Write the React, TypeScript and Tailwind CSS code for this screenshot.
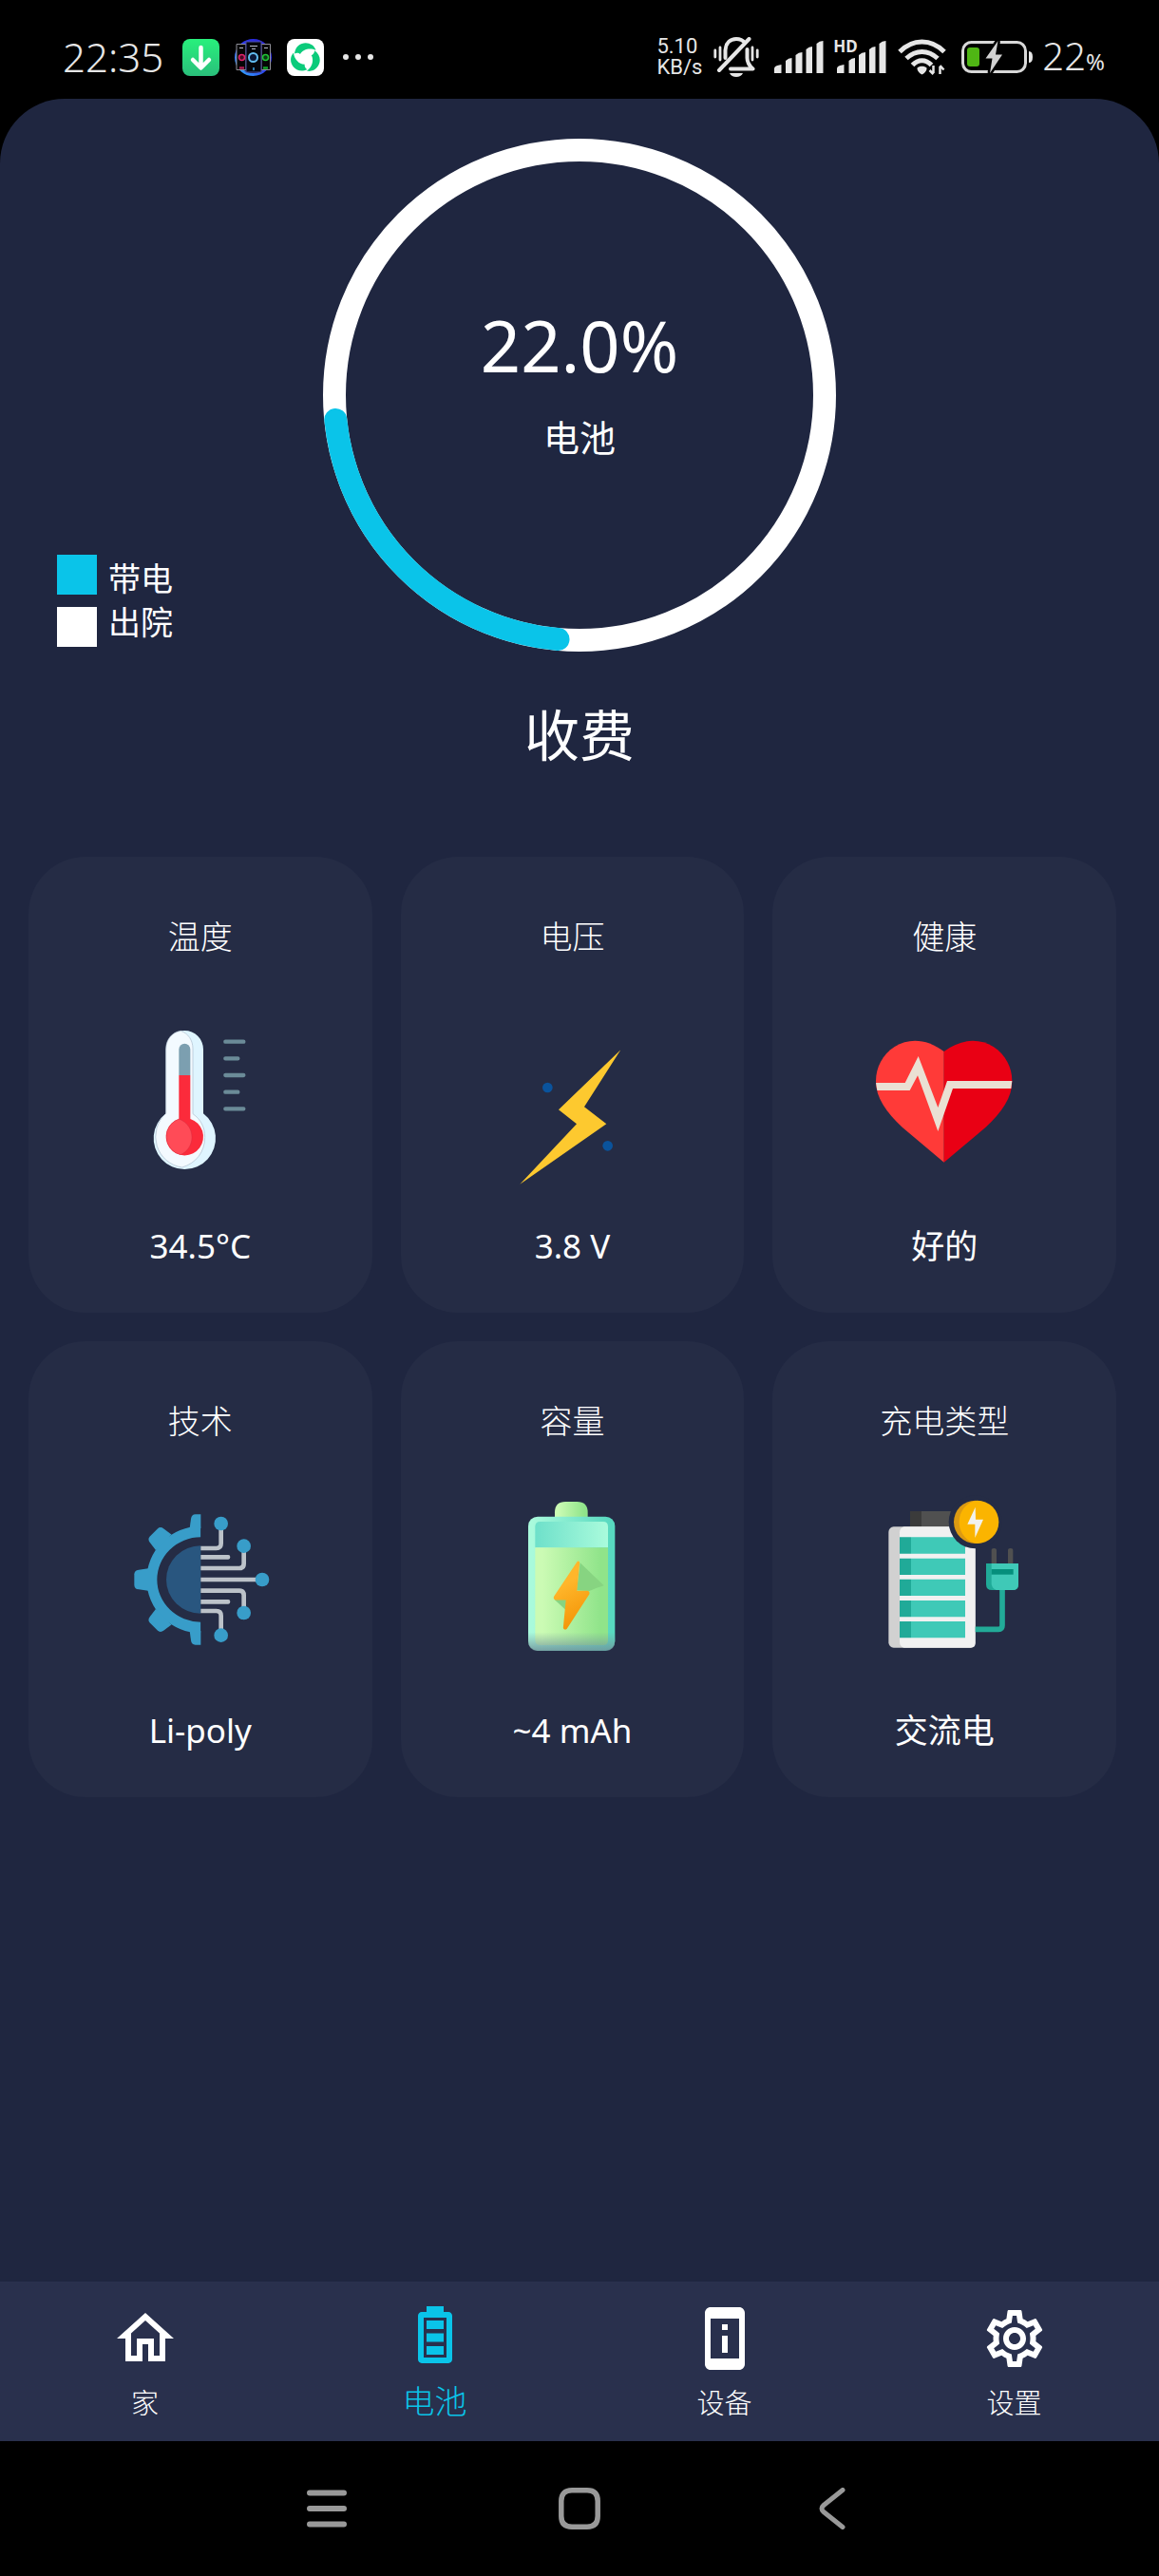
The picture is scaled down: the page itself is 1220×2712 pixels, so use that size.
import React, { useState } from "react";
import {
  MdOutlineHome,
  MdOutlineSettings,
  MdPermDeviceInformation,
} from "react-icons/md";

const BATTERY_LEVEL = 22;

const StatusBar: React.FC = () => (
  <header className="flex h-[104px] items-center justify-between bg-black pl-[66px] pr-[57px] pt-4 text-[#e6e6e6]">
    <div className="flex items-center">
      <span className="mr-5 text-[42px] font-light leading-none">22:35</span>
      <div className="flex items-center gap-4">
        <svg viewBox="0 0 39 39" className="h-[39px] w-[39px]">
          <defs>
            <linearGradient id="download-bg" x1="0" y1="0" x2="0" y2="1">
              <stop offset="0" stopColor="#28f07c" />
              <stop offset="1" stopColor="#2abf7b" />
            </linearGradient>
          </defs>
          <rect width="39" height="39" rx="8" fill="url(#download-bg)" />
          <path
            d="M19.5 9v20M11 22l8.500 8.500 8.500-8.500"
            fill="none"
            stroke="#fff"
            strokeWidth="4.500"
            strokeLinecap="round"
            strokeLinejoin="round"
          />
        </svg>
        <svg viewBox="0 0 39 39" className="h-[39px] w-[39px]">
          <defs>
            <linearGradient id="themes-ring" x1="1" y1="0" x2="0" y2="1">
              <stop offset="0" stopColor="#2a1ed2" />
              <stop offset="0.500" stopColor="#2b3cf0" />
              <stop offset="1" stopColor="#35b6ff" />
            </linearGradient>
          </defs>
          <circle cx="19.500" cy="19.500" r="18" fill="#05061c" stroke="url(#themes-ring)" strokeWidth="3" />
          <path d="M2 5.500h10v27H2zM28 5.500h9.500v27H28z" fill="#050505" stroke="#8f8f98" strokeWidth="1" />
          <rect x="12" y="3" width="16" height="32" fill="#04060c" stroke="#4a4fa0" strokeWidth="1" />
          <path d="M16 7.500h8M18 10.500h4M5 9.500h4M31 9.500h4" stroke="#b8bccb" strokeWidth="1" />
          <circle cx="7.500" cy="19.500" r="3" fill="#4a0a25" stroke="#e0246c" strokeWidth="1.500" />
          <circle cx="19.500" cy="19.500" r="4.500" fill="#0a1838" stroke="#62bdf0" strokeWidth="2" />
          <circle cx="32.500" cy="19.500" r="3" fill="#083a12" stroke="#22c436" strokeWidth="1.500" />
          <path d="M5 30.500h5" stroke="#b01c55" strokeWidth="2.500" />
          <path d="M30 30.500h5" stroke="#13a52b" strokeWidth="2.500" />
          <path d="M20 30v3" stroke="#39a4e8" strokeWidth="1.500" />
        </svg>
        <svg viewBox="0 0 39 39" className="h-[39px] w-[39px]">
          <rect width="39" height="39" rx="8" fill="#fff" />
          <g fill="#0bcb7b" transform="translate(19.500 20)">
            <path d="M-11.500-4.500C-10-19 8-19 11-8 5-11-3-9-5.500-4-7-5.500-9.500-5.500-11.500-4.500z" />
            <path d="M-11.500-4.500C-10-19 8-19 11-8 5-11-3-9-5.500-4-7-5.500-9.500-5.500-11.500-4.500z" transform="rotate(120)" />
            <path d="M-11.500-4.500C-10-19 8-19 11-8 5-11-3-9-5.500-4-7-5.500-9.500-5.500-11.500-4.500z" transform="rotate(240)" />
          </g>
        </svg>
      </div>
      <svg viewBox="0 0 32 6" className="ml-5 h-[6px] w-[32px]" fill="currentColor">
        <circle cx="3" cy="3" r="3" />
        <circle cx="16" cy="3" r="3" />
        <circle cx="29" cy="3" r="3" />
      </svg>
    </div>

    <div className="flex items-center">
      <div className="mr-3 font-[Roboto,sans-serif] text-[22px] leading-[22px]">
        <div>5.10</div>
        <div>KB/s</div>
      </div>
      <svg
        viewBox="0 0 48 42"
        className="mr-4 h-[42px] w-[48px]"
        fill="none"
        stroke="currentColor"
        strokeWidth="4"
        strokeLinecap="round"
        strokeLinejoin="round"
      >
        <path d="M12.500 22v-8C13 6 18 2 24 2c4 0 7 1.500 9 4M35.500 13v9c0 4 2 8 6 11.500H18M37.500 2L6 35" />
        <path d="M1.800 14v7M7 11v13M41 11v13M46.200 14v7" strokeWidth="2.800" />
        <path d="M17 38h14c-1 2.500-4 4-7 4s-6-1.500-7-4z" fill="currentColor" stroke="none" />
      </svg>
      <svg viewBox="0 0 52 34" className="mr-3 h-[34px] w-[52px]" fill="currentColor">
        <path d="M0 29q0-3 7.500-4v9H0zM12 21q3-3 6.500-3v16H12zM22.500 15q3-3 7-3v22h-7zM33.500 9q3-3 6.500-3v28h-6.500zM44.500 3q3-3 7-3v34h-7z" />
      </svg>
      <div className="relative mr-3">
        <span className="absolute -left-0.5 -top-px text-[17px] font-bold leading-[14px]">HD</span>
        <svg viewBox="0 0 54 34" className="h-[34px] w-[54px]" fill="currentColor">
          <path d="M2 29q0-3 7.500-4v9H2zM14.500 21q3-3 6.500-3v16h-6.500zM25 15q3-3 7-3v22h-7zM36 9q3-3 6.500-3v28H36zM46.500 3q3-3 7-3v34h-7z" />
        </svg>
      </div>
      <svg viewBox="0 0 51 38" className="mr-4 h-[38px] w-[51px]" fill="none" stroke="currentColor" strokeWidth="5">
        <path d="M2 13.500C16-.5 35-.5 49 13.500M9 20.500c10-9.500 23-9.500 33 0M15.500 27.500c6-6.500 14-6.500 20 0" />
        <path d="M20.500 30.500c2-2.500 8-2.500 10 0 .5 3-3 6-5 7-2-1-5.500-4-5-7z" fill="currentColor" stroke="none" />
        <path d="M37.500 28v8M37.500 37l-4-4M44.500 37v-8M44.500 28l4 4.500" strokeWidth="2.500" />
      </svg>
      <svg viewBox="0 0 75 34" className="mr-[10px] h-[34px] w-[75px]">
        <rect x="1.500" y="1.500" width="66" height="31" rx="9" fill="none" stroke="#d8d8d8" strokeWidth="3" />
        <rect x="6" y="7" width="13" height="20" rx="3" fill="#4fb614" />
        <path d="M71 11q4 0 4 6t-4 6z" fill="#e6e6e6" />
        <path
          d="M38.500 0L25.500 18.500h7L30 34l13-19.500h-7z"
          fill="#d2d2d2"
          stroke="#000"
          strokeWidth="5"
          paintOrder="stroke"
        />
      </svg>
      <span className="text-[40px] font-light leading-none">
        22<span className="text-2xl font-normal">%</span>
      </span>
    </div>
  </header>
);

const BatteryRing: React.FC<{ level: number }> = ({ level }) => {
  const radius = 258;
  const length = 2 * Math.PI * radius;

  return (
    <div className="grid place-items-center">
      <svg viewBox="0 0 540 540" className="col-start-1 row-start-1 h-[540px] w-[540px]" fill="none">
        <circle cx="270" cy="270" r={radius} stroke="#fff" strokeWidth="24" />
        <circle
          cx="270"
          cy="270"
          r={radius}
          stroke="#0ac4e9"
          strokeWidth="24"
          strokeLinecap="round"
          strokeDasharray={`${(length * level) / 100} ${length}`}
          transform="rotate(95 270 270)"
        />
      </svg>
      <div className="col-start-1 row-start-1 flex flex-col items-center gap-[18px] pb-[26px]">
        <span className="text-[74px] leading-[96px]">{level.toFixed(1)}%</span>
        <span className="text-[38px] leading-[60px]">电池</span>
      </div>
    </div>
  );
};

const ThermometerIcon = () => (
  <svg viewBox="272 477 600 600" className="h-[200px] w-[200px]">
    <path d="M463 644a59 59 0 0 1 118 0v203a98 98 0 1 1-118 0z" fill="#dff5ff" />
    <path
      d="M463 644c0-32 20-54 47-58 24 8 38 30 38 56v206c24 16 38 42 38 74 0 46-28 82-72 95a98 98 0 0 1-51-170z"
      fill="#f3faff"
      stroke="#aebccb"
      strokeWidth="2"
    />
    <path d="M504 644a18 18 0 0 1 36 0v82h-36z" fill="#7c9fb0" />
    <path d="M504 726h36v138a59 59 0 1 1-36 0z" fill="#fb2b3b" />
    <path d="M504 864c26 10 41 32 41 58 0 24-14 46-36 55a59 59 0 0 1-5-113z" fill="#ff4b57" stroke="#c8283c" strokeWidth="1" />
    <path
      d="M651 620h57M651 673h39M651 726h57M651 779h39M651 832h57"
      stroke="#6b8b98"
      strokeWidth="13"
      strokeLinecap="round"
    />
  </svg>
);

const VoltageIcon = () => (
  <svg viewBox="277 477 600 600" className="h-[200px] w-[200px]">
    <path d="M731 646L616 826l70 54-273 190 179-190-57-45z" fill="#fdc92f" />
    <circle cx="500" cy="765" r="16" fill="#0a539c" />
    <circle cx="690" cy="949" r="16" fill="#0a539c" />
  </svg>
);

const HeartIcon = () => (
  <svg viewBox="282 477 600 600" className="h-[200px] w-[200px]">
    <path d="M581 651C530 612 472 606 425 636c-38 25-59 64-59 109 0 52 32 98 84 146l131 110z" fill="#ff3a38" />
    <path d="M581 651c51-39 109-45 156-15 38 25 59 64 59 109 0 52-32 98-84 146l-131 110z" fill="#e90014" />
    <path d="M366 750h92l42-84 62 162 29-84h205l-3 24H609l-47 135-64-176-25 47H370z" fill="#eae0d3" />
  </svg>
);

const TechnologyIcon = () => {
  const tooth = "M407 754l-30 4q-14 2-14 14v34q0 12 14 14l30 4z";
  return (
    <svg viewBox="272 477 600 600" className="h-[200px] w-[200px]">
      <defs>
        <clipPath id="gear-half">
          <rect x="340" y="560" width="233" height="460" />
        </clipPath>
      </defs>
      <g fill="#389dc9" clipPath="url(#gear-half)">
        <path d="M573 620a171 169 0 0 0 0 338v-35a138 134 0 0 1 0-268z" />
        <path d={tooth} />
        <path d={tooth} transform="rotate(45 573 789)" />
        <path d={tooth} transform="rotate(-45 573 789)" />
        <path d={tooth} transform="rotate(90 573 789) translate(4)" />
        <path d={tooth} transform="rotate(-90 573 789) translate(4)" />
      </g>
      <path d="M573 682a109 107 0 0 0 0 214z" fill="#29567f" />
      <path
        d="M573 690h49q15 0 15-15v-50M573 753h122q14 0 14-14v-50M573 789h190M573 824h122q14 0 14 14v50M573 888h49q15 0 15 15v50"
        fill="none"
        stroke="#bcc2c9"
        strokeWidth="14"
      />
      <path d="M573 711h87q6 0 6 7t-6 7h-87zM573 852h87q6 0 6 7t-6 7h-87z" fill="#bcc2c9" />
      <g fill="#389dc9">
        <circle cx="637" cy="612" r="22" />
        <circle cx="709" cy="683" r="22" />
        <circle cx="767" cy="789" r="22" />
        <circle cx="709" cy="894" r="22" />
        <circle cx="637" cy="965" r="22" />
      </g>
    </svg>
  );
};

const CapacityIcon = () => (
  <svg viewBox="277 477 600 600" className="h-[200px] w-[200px]">
    <defs>
      <linearGradient id="cell-green">
        <stop offset="0.100" stopColor="#cbfbb4" />
        <stop offset="0.900" stopColor="#90e48a" />
      </linearGradient>
      <linearGradient id="cell-case">
        <stop offset="0.050" stopColor="#a9fadc" />
        <stop offset="0.950" stopColor="#58d9c0" />
      </linearGradient>
      <linearGradient id="cell-glass">
        <stop offset="0" stopColor="#6ee0ca" />
        <stop offset="1" stopColor="#aafbdc" />
      </linearGradient>
      <linearGradient id="cell-base" x1="0" y1="0" x2="0" y2="1">
        <stop offset="0" stopColor="#7a9aa0" stopOpacity="0" />
        <stop offset="1" stopColor="#6f949c" stopOpacity="0.850" />
      </linearGradient>
      <linearGradient id="cell-bolt" x1="0.300" y1="0" x2="0.600" y2="1">
        <stop offset="0.300" stopColor="#ffb62b" />
        <stop offset="1" stopColor="#f39406" />
      </linearGradient>
    </defs>
    <path d="M523 592v-15q0-34 34-34h36q34 0 34 34v15z" fill="url(#cell-green)" />
    <rect x="439" y="590" width="274" height="423" rx="30" fill="url(#cell-case)" />
    <path d="M461 688v-66q0-16 16-16h198q16 0 16 16v66z" fill="url(#cell-glass)" />
    <path d="M461 688h230v292q0 16-16 16H477q-16 0-16-16z" fill="url(#cell-green)" />
    <path d="M603 736l75 72q-20 6-46 17l-40-2zM522 852l35 32 5-32z" fill="#87d481" />
    <path d="M439 955h274v28q0 30-30 30H469q-30 0-30-30z" fill="url(#cell-base)" />
    <path
      d="M597 735l-73 110q-1 4 3 4h36l-9 92q2 2 4 0l70-108q1-4-3-4h-37l9-92z"
      fill="url(#cell-bolt)"
      stroke="url(#cell-bolt)"
      strokeWidth="9"
      strokeLinejoin="round"
    />
  </svg>
);

const ChargeTypeIcon = () => (
  <svg viewBox="282 477 600 600" className="h-[200px] w-[200px]">
    <rect x="474" y="573" width="140" height="52" fill="#505050" />
    <rect x="474" y="573" width="36" height="52" fill="#3b3b3b" />
    <rect x="406" y="622" width="274" height="382" rx="16" fill="#d1d1d1" />
    <path d="M455 622h211q14 0 14 14v354q0 14-14 14H455q-14-4-14-18V640q0-14 14-18z" fill="#f1f1f1" />
    <path d="M477 655h171v52H477zM477 722h171v52H477zM477 788h171v52H477zM477 855h171v52H477zM477 921h171v52H477z" fill="#3fc9b7" />
    <path d="M441 655h36v52h-36zM441 722h36v52h-36zM441 788h36v52h-36zM441 855h36v52h-36zM441 921h36v52h-36z" fill="#20aa98" />
    <circle cx="680" cy="607" r="84" fill="#252c45" />
    <circle cx="680" cy="607" r="68" fill="#dc9a12" />
    <path d="M686 539a68 68 0 0 1 0 136c-34-4-57-34-57-68s23-64 57-68z" fill="#fbb400" />
    <path d="M680 560l-25 54h24v43l26-58h-24z" fill="#f2f2ee" />
    <path d="M731 740v-43q0-7 8-7t8 7v43zM783 740v-43q0-7 8-7t8 7v43z" fill="#505050" />
    <path d="M765 820v114q0 12-12 12h-73" fill="none" stroke="#22ab98" strokeWidth="17" />
    <path d="M714 738h102v66q0 18-18 18h-66q-18 0-18-18z" fill="#20aa98" />
    <path d="M731 738h85v66q0 18-18 18h-52q-15-6-15-20z" fill="#3fc9b7" />
    <path d="M731 756h69v17h-69z" fill="#058f7c" />
  </svg>
);

interface StatCardProps {
  label: string;
  value: string;
  icon: React.ReactNode;
}

const StatCard: React.FC<StatCardProps> = ({ label, value, icon }) => (
  <section className="flex flex-col items-center rounded-[60px] bg-[#252c45] pb-[46px] pt-[60px]">
    <h2 className="text-[34px] font-light leading-[48px]">{label}</h2>
    <div className="my-[39px]">{icon}</div>
    <p className="text-[35px] leading-[48px]">{value}</p>
  </section>
);

const stats: StatCardProps[] = [
  { label: "温度", value: "34.5°C", icon: <ThermometerIcon /> },
  { label: "电压", value: "3.8 V", icon: <VoltageIcon /> },
  { label: "健康", value: "好的", icon: <HeartIcon /> },
  { label: "技术", value: "Li-poly", icon: <TechnologyIcon /> },
  { label: "容量", value: "~4 mAh", icon: <CapacityIcon /> },
  { label: "充电类型", value: "交流电", icon: <ChargeTypeIcon /> },
];

const BatteryTabIcon = () => (
  <svg viewBox="0 0 24 24" className="h-[72px] w-[72px]" fill="currentColor">
    <path
      fillRule="evenodd"
      d="M9 2h6v2h1.700C17.400 4 18 4.600 18 5.300v15.400c0 .7-.6 1.300-1.300 1.300H7.300C6.600 22 6 21.400 6 20.700V5.300C6 4.600 6.600 4 7.300 4H9zM8 6v14h8V6z"
    />
    <path d="M9 7h6v3H9zM9 11.500h6v3H9zM9 16h6v3H9z" />
  </svg>
);

const tabs = [
  { id: "home", label: "家", icon: <MdOutlineHome className="h-[72px] w-[72px]" /> },
  { id: "battery", label: "电池", icon: <BatteryTabIcon /> },
  {
    id: "device",
    label: "设备",
    icon: <MdPermDeviceInformation className="h-[72px] w-[72px]" />,
  },
  { id: "settings", label: "设置", icon: <MdOutlineSettings className="h-[72px] w-[72px]" /> },
];

const App: React.FC = () => {
  const [activeTab, setActiveTab] = useState("battery");

  return (
    <div
      lang="zh-CN"
      className="flex min-h-screen flex-col bg-black font-['Noto_Sans','Noto_Sans_CJK_SC',sans-serif] text-white"
    >
      <StatusBar />

      <main className="flex-1 rounded-t-[68px] bg-[#1f2640] pt-[42px]">
        <div className="grid grid-cols-[1fr_auto_1fr]">
          <div className="flex items-start gap-3 self-end pb-[5px] pl-[60px]">
            <div className="flex flex-col gap-[13px]">
              <div className="h-[42px] w-[42px] bg-[#0ac4e9]" />
              <div className="h-[42px] w-[42px] bg-white" />
            </div>
            <ul className="pt-0.5 text-[34px] leading-[46px]">
              <li>带电</li>
              <li>出院</li>
            </ul>
          </div>
          <BatteryRing level={BATTERY_LEVEL} />
        </div>
        <h1 className="mt-12 text-center text-[58px] leading-[80px]">收费</h1>

        <div className="mt-[88px] grid grid-cols-3 gap-[30px] pl-[30px] pr-[45px]">
          {stats.map((stat) => (
            <StatCard key={stat.label} {...stat} />
          ))}
        </div>
      </main>

      <nav className="grid h-[168px] grid-cols-4 bg-[#29304d]">
        {tabs.map((tab) => (
          <button
            key={tab.id}
            type="button"
            onClick={() => setActiveTab(tab.id)}
            className={
              tab.id === activeTab
                ? "flex flex-col items-center gap-3 pt-5 text-[34px] font-light leading-[44px] text-[#0ac4e9]"
                : "flex flex-col items-center gap-3 pt-6 text-[29px] font-light leading-[40px]"
            }
          >
            {tab.icon}
            {tab.label}
          </button>
        ))}
      </nav>

      <div className="flex h-[142px] items-center justify-center bg-black text-[#999]">
        <button type="button" aria-label="最近任务" className="flex w-[266px] justify-center">
          <svg viewBox="0 0 42 44" className="h-[44px] w-[42px]" stroke="currentColor" strokeWidth="6" strokeLinecap="round">
            <path d="M3 5.500h36M3 22h36M3 38.500h36" />
          </svg>
        </button>
        <button type="button" aria-label="主屏幕" className="flex w-[266px] justify-center">
          <svg viewBox="0 0 44 44" className="h-[44px] w-[44px]" fill="none" stroke="currentColor" strokeWidth="5.500">
            <path d="M14 2.800h16q11.200 0 11.200 11.200v16q0 11.200-11.200 11.200H14q-11.200 0-11.200-11.200V14Q2.800 2.800 14 2.800z" />
          </svg>
        </button>
        <button type="button" aria-label="返回" className="flex w-[266px] justify-center">
          <svg
            viewBox="0 0 28 44"
            className="h-[44px] w-[28px]"
            fill="none"
            stroke="currentColor"
            strokeWidth="5"
            strokeLinecap="round"
          >
            <path d="M25 2.500L5 18.500q-4 3.500 0 7l20 16" />
          </svg>
        </button>
      </div>
    </div>
  );
};

export default App;
